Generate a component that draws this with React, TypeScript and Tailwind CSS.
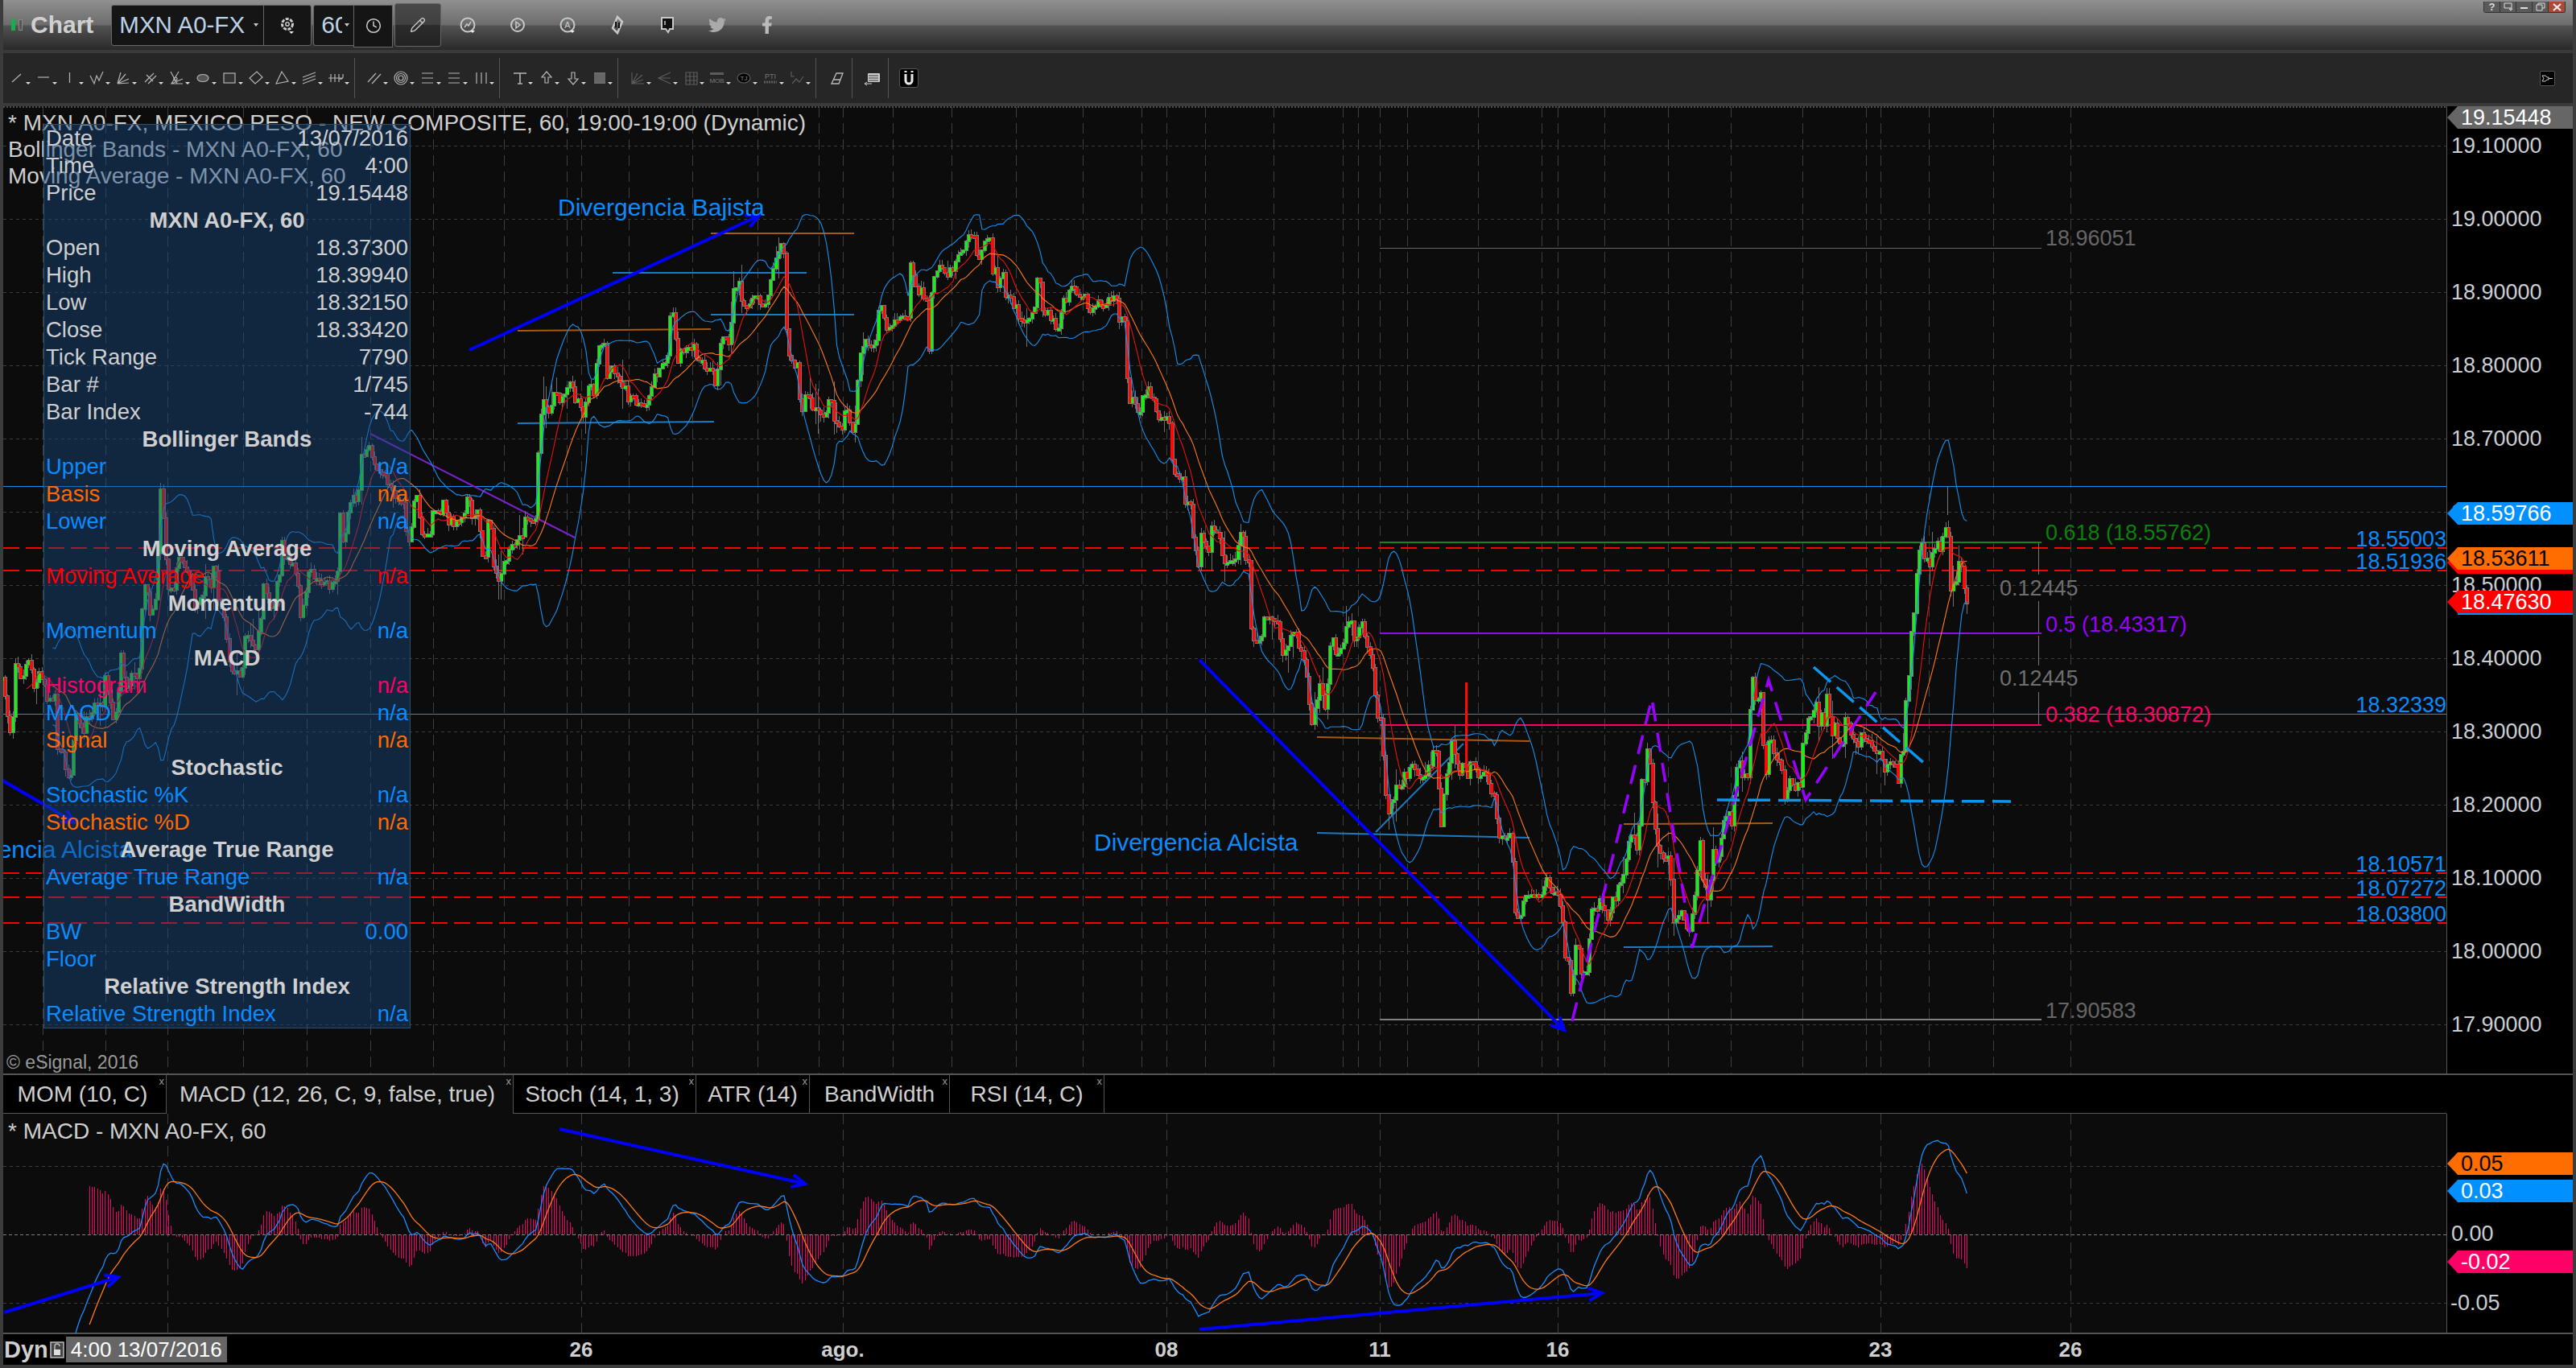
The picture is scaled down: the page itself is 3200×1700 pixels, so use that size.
import { Clock, Pencil } from 'lucide-react'
import { FaFacebookF, FaTwitter } from 'react-icons/fa'
import type { ReactNode } from 'react'

type Key = [number, number, number, 'g' | 'r']

// candles read off the chart: x, top of body, bottom of body, colour. All in page pixels.
const KEYS: Key[] = [
  [7, 845, 874, 'r'], [15, 898, 930, 'r'], [20, 816, 870, 'g'], [31, 825, 853, 'g'], [41, 822, 853, 'r'], [48, 835, 853, 'g'],
  [59, 853, 872, 'r'], [72, 865, 930, 'r'], [83, 939, 970, 'r'], [93, 886, 960, 'g'], [108, 890, 910, 'g'], [117, 870, 890, 'g'],
  [131, 841, 880, 'g'], [141, 878, 898, 'r'], [150, 808, 870, 'g'], [155, 821, 853, 'r'], [164, 835, 850, 'g'], [174, 832, 845, 'g'],
  [178, 720, 833, 'g'], [186, 730, 768, 'r'], [198, 650, 741, 'g'], [200, 605, 648, 'g'], [208, 660, 730, 'r'], [221, 690, 730, 'g'],
  [241, 714, 755, 'r'], [257, 710, 735, 'g'], [265, 702, 735, 'g'], [272, 710, 743, 'r'], [281, 760, 788, 'r'], [286, 796, 833, 'r'],
  [298, 833, 843, 'r'], [305, 792, 831, 'g'], [310, 790, 796, 'g'], [322, 782, 808, 'g'], [327, 723, 780, 'g'], [343, 723, 763, 'g'],
  [350, 690, 718, 'g'], [352, 644, 690, 'r'], [369, 702, 727, 'r'], [374, 731, 772, 'r'], [379, 739, 763, 'g'], [384, 704, 731, 'g'],
  [390, 706, 718, 'r'], [398, 714, 727, 'r'], [409, 718, 735, 'r'], [415, 712, 731, 'g'], [421, 690, 729, 'g'], [424, 623, 673, 'g'],
  [427, 623, 690, 'r'], [434, 630, 648, 'g'], [440, 615, 626, 'g'], [448, 565, 630, 'g'], [455, 562, 572, 'g'], [462, 557, 570, 'r'],
  [471, 577, 590, 'r'], [483, 590, 608, 'r'], [490, 600, 620, 'r'], [506, 623, 680, 'r'], [514, 640, 660, 'g'], [519, 597, 627, 'r'],
  [525, 647, 665, 'r'], [532, 664, 672, 'g'], [538, 630, 661, 'g'], [551, 618, 640, 'g'], [557, 637, 654, 'r'], [564, 642, 652, 'r'],
  [580, 620, 640, 'g'], [586, 613, 648, 'r'], [596, 630, 648, 'r'], [602, 682, 700, 'r'], [608, 620, 682, 'g'], [615, 694, 710, 'r'],
  [621, 713, 727, 'r'], [627, 692, 710, 'g'], [634, 672, 700, 'g'], [643, 672, 678, 'g'], [653, 637, 665, 'g'], [662, 648, 650, 'r'],
  [669, 558, 648, 'g'], [673, 496, 558, 'g'], [680, 495, 510, 'r'], [688, 484, 510, 'g'], [695, 490, 500, 'r'], [707, 472, 485, 'g'],
  [715, 480, 500, 'r'], [723, 492, 523, 'r'], [733, 470, 492, 'g'], [742, 432, 496, 'g'], [754, 423, 473, 'r'], [765, 454, 468, 'r'],
  [773, 470, 480, 'r'], [780, 478, 496, 'r'], [790, 492, 500, 'r'], [800, 500, 506, 'r'], [806, 490, 502, 'g'], [812, 468, 485, 'g'],
  [820, 455, 470, 'g'], [832, 396, 454, 'g'], [841, 385, 458, 'r'], [850, 428, 445, 'r'], [858, 423, 440, 'r'], [866, 430, 448, 'r'],
  [875, 445, 460, 'r'], [889, 461, 482, 'r'], [895, 430, 460, 'g'], [899, 415, 427, 'g'], [910, 363, 430, 'g'], [918, 347, 361, 'g'],
  [924, 368, 382, 'r'], [934, 372, 378, 'g'], [946, 370, 380, 'r'], [956, 351, 380, 'g'], [962, 323, 351, 'g'], [969, 302, 320, 'g'],
  [978, 315, 444, 'r'], [985, 444, 454, 'r'], [994, 454, 506, 'r'], [1000, 488, 508, 'g'], [1010, 495, 508, 'r'], [1020, 510, 518, 'r'],
  [1029, 494, 516, 'g'], [1036, 500, 523, 'r'], [1042, 523, 534, 'r'], [1050, 508, 530, 'g'], [1058, 516, 546, 'r'], [1062, 525, 540, 'g'],
  [1067, 437, 523, 'g'], [1074, 422, 436, 'g'], [1080, 420, 430, 'r'], [1087, 425, 430, 'g'], [1093, 372, 420, 'g'], [1102, 395, 412, 'r'],
  [1112, 396, 405, 'g'], [1120, 390, 398, 'g'], [1131, 325, 400, 'g'], [1140, 352, 365, 'r'], [1148, 360, 372, 'r'], [1154, 368, 444, 'r'],
  [1160, 347, 368, 'g'], [1166, 325, 347, 'g'], [1176, 335, 345, 'r'], [1182, 330, 340, 'g'], [1189, 315, 337, 'g'], [1201, 296, 313, 'g'],
  [1213, 287, 317, 'r'], [1222, 300, 320, 'g'], [1233, 299, 339, 'r'], [1240, 330, 363, 'r'], [1249, 335, 368, 'r'], [1259, 368, 380, 'r'],
  [1266, 380, 396, 'r'], [1272, 396, 403, 'r'], [1280, 392, 400, 'g'], [1288, 346, 392, 'g'], [1296, 350, 392, 'r'], [1306, 385, 400, 'r'],
  [1312, 395, 408, 'r'], [1320, 368, 406, 'g'], [1329, 354, 375, 'g'], [1339, 355, 368, 'r'], [1351, 368, 385, 'r'], [1362, 375, 385, 'g'],
  [1376, 370, 382, 'g'], [1385, 365, 378, 'g'], [1390, 365, 400, 'r'], [1399, 392, 416, 'r'], [1402, 447, 499, 'r'], [1412, 496, 516, 'r'],
  [1420, 495, 510, 'g'], [1431, 482, 496, 'r'], [1438, 496, 520, 'r'], [1453, 520, 527, 'r'], [1457, 527, 587, 'r'], [1465, 587, 595, 'r'],
  [1472, 589, 625, 'r'], [1482, 627, 667, 'r'], [1492, 665, 703, 'g'], [1505, 650, 690, 'g'], [1520, 670, 704, 'r'], [1540, 660, 694, 'g'],
  [1548, 668, 700, 'r'], [1555, 700, 796, 'r'], [1570, 765, 800, 'g'], [1592, 770, 815, 'r'], [1604, 785, 800, 'g'], [1614, 785, 810, 'r'],
  [1622, 810, 830, 'r'], [1634, 869, 911, 'g'], [1640, 850, 870, 'g'], [1650, 842, 882, 'g'], [1654, 785, 841, 'g'], [1660, 800, 815, 'r'],
  [1672, 780, 806, 'g'], [1683, 770, 800, 'r'], [1695, 768, 789, 'r'], [1706, 813, 834, 'r'], [1712, 862, 890, 'r'], [1718, 890, 925, 'r'],
  [1722, 943, 989, 'r'], [1729, 992, 1017, 'g'], [1735, 975, 996, 'g'], [1745, 960, 975, 'g'], [1752, 948, 967, 'g'], [1760, 950, 965, 'r'],
  [1766, 957, 972, 'r'], [1775, 945, 960, 'g'], [1781, 932, 955, 'g'], [1789, 932, 1027, 'r'], [1795, 968, 1027, 'g'], [1804, 922, 943, 'g'],
  [1813, 948, 965, 'r'], [1821, 945, 955, 'r'], [1827, 943, 970, 'g'], [1836, 950, 968, 'r'], [1842, 955, 972, 'g'], [1850, 965, 972, 'r'],
  [1858, 975, 996, 'g'], [1861, 996, 1038, 'r'], [1875, 1030, 1045, 'g'], [1881, 1045, 1111, 'r'], [1884, 1111, 1148, 'r'], [1893, 1115, 1136, 'g'],
  [1900, 1108, 1115, 'g'], [1910, 1112, 1118, 'r'], [1921, 1090, 1108, 'g'], [1928, 1102, 1112, 'r'], [1939, 1112, 1128, 'r'], [1944, 1129, 1189, 'r'],
  [1951, 1189, 1236, 'r'], [1957, 1178, 1224, 'g'], [1964, 1176, 1210, 'r'], [1976, 1132, 1204, 'g'], [1987, 1115, 1132, 'g'], [1996, 1128, 1145, 'r'],
  [2004, 1115, 1130, 'g'], [2010, 1097, 1118, 'g'], [2016, 1090, 1100, 'g'], [2022, 1045, 1090, 'g'], [2033, 1038, 1055, 'r'], [2039, 953, 1050, 'g'],
  [2045, 929, 1003, 'g'], [2051, 929, 960, 'r'], [2055, 960, 1052, 'r'], [2059, 1027, 1052, 'r'], [2068, 1060, 1070, 'r'], [2078, 1062, 1143, 'r'],
  [2088, 1132, 1146, 'g'], [2097, 1143, 1157, 'r'], [2104, 1115, 1150, 'g'], [2110, 1066, 1111, 'g'], [2115, 1041, 1096, 'r'], [2120, 1094, 1108, 'r'],
  [2123, 1108, 1127, 'r'], [2128, 1055, 1103, 'g'], [2137, 1043, 1080, 'g'], [2142, 1013, 1041, 'g'], [2151, 1010, 1027, 'r'], [2156, 971, 1010, 'g'],
  [2160, 934, 964, 'g'], [2168, 960, 968, 'g'], [2175, 860, 964, 'g'], [2180, 832, 873, 'r'], [2186, 864, 873, 'g'], [2191, 864, 934, 'r'],
  [2198, 913, 966, 'g'], [2206, 930, 948, 'r'], [2214, 941, 957, 'r'], [2217, 957, 994, 'r'], [2226, 968, 975, 'r'], [2234, 971, 982, 'g'],
  [2240, 922, 975, 'g'], [2246, 890, 918, 'g'], [2252, 883, 890, 'g'], [2260, 876, 905, 'r'], [2266, 887, 905, 'r'], [2274, 852, 918, 'r'],
  [2283, 900, 922, 'r'], [2292, 892, 925, 'g'], [2300, 897, 915, 'r'], [2312, 911, 932, 'g'], [2326, 922, 930, 'r'], [2340, 936, 957, 'r'],
  [2346, 950, 958, 'g'], [2358, 950, 978, 'r'], [2363, 931, 948, 'g'], [2369, 840, 930, 'g'], [2375, 772, 837, 'g'], [2379, 753, 772, 'g'],
  [2382, 697, 753, 'g'], [2386, 665, 697, 'g'], [2392, 683, 697, 'r'], [2396, 688, 703, 'r'], [2400, 682, 713, 'g'], [2406, 672, 692, 'g'],
  [2412, 680, 692, 'r'], [2415, 663, 680, 'g'], [2419, 640, 663, 'g'], [2423, 657, 727, 'r'], [2427, 727, 735, 'g'], [2432, 717, 727, 'g'],
  [2435, 690, 713, 'g'], [2439, 695, 732, 'r'], [2443, 733, 748, 'r'],
]

function rng(seed: number) {
  return () => {
    seed = (seed + 0x6d2b79f5) | 0
    let t = Math.imul(seed ^ (seed >>> 15), 1 | seed)
    t = (t + Math.imul(t ^ (t >>> 7), 61 | t)) ^ t
    return ((t ^ (t >>> 14)) >>> 0) / 4294967296
  }
}

const pts: [number, number][] = []
for (const [x, top, bot, c] of KEYS) {
  pts.push([x - 1.6, c === 'r' ? top : bot], [x + 1.6, c === 'r' ? bot : top])
}

function yAt(x: number) {
  if (x <= pts[0][0]) return pts[0][1]
  for (let i = 1; i < pts.length; i++) {
    if (x <= pts[i][0]) {
      const [x0, y0] = pts[i - 1]
      const [x1, y1] = pts[i]
      return y0 + ((x - x0) / Math.max(x1 - x0, 0.01)) * (y1 - y0)
    }
  }
  return pts[pts.length - 1][1]
}

const rand = rng(7)
const bars = Array.from({ length: 745 }, (_, i) => 3 + i * 3.28).map((x) => ({ x, c: yAt(x + 1.64) + (rand() - 0.5) * 7, o: 0, hi: 0, lo: 0 }))
bars.forEach((b, i) => {
  b.o = i ? bars[i - 1].c : b.c + 4
  const big = rand() < 0.12
  b.hi = Math.min(b.o, b.c) - rand() * (big ? 30 : 9)
  b.lo = Math.max(b.o, b.c) + rand() * (big ? 30 : 9)
})

const closes = bars.map((b) => b.c)
const sma = (n: number) => closes.map((_, i) => (i < n - 1 ? null : closes.slice(i - n + 1, i + 1).reduce((a, v) => a + v, 0) / n))
const basis = sma(20)
const fast = sma(10)
const dev = closes.map((_, i) => {
  const m = basis[i]
  if (m === null) return 0
  const w = closes.slice(i - 19, i + 1)
  return Math.sqrt(w.reduce((a, v) => a + (v - m) ** 2, 0) / 20)
})
const line = (vals: (number | null)[]) =>
  vals.map((v, i) => (v === null ? '' : `${bars[i].x.toFixed(1)},${v.toFixed(1)}`)).filter(Boolean).join(' ')

// MACD is worked out from the pixel series; 910px is one price unit on the main pane
function ema(src: (number | null)[], n: number) {
  const k = 2 / (n + 1)
  const out: (number | null)[] = src.map(() => null)
  let prev: number | null = null
  let seen = 0
  let sum = 0
  src.forEach((v, i) => {
    if (v === null) return
    if (prev === null) {
      sum += v
      seen++
      if (seen === n) {
        prev = sum / n
        out[i] = prev
      }
    } else {
      prev = v * k + prev * (1 - k)
      out[i] = prev
    }
  })
  return out
}
const prices = closes.map((y) => 19 - (y - 272) / 910)
const e12 = ema(prices, 12)
const e26 = ema(prices, 26)
const macd = prices.map((_, i) => (e26[i] === null ? null : (e12[i] as number) - (e26[i] as number) - 0.05 * Math.exp(-(i - 25) / 14)))
const signal = ema(macd, 9)
const macdY = (v: number) => 1535 - v * 1600

const GRID_X = [53, 131, 208, 302, 381, 460, 538, 626, 704, 722, 781, 860, 941, 1017, 1047, 1109, 1182, 1262, 1345, 1418, 1449, 1497, 1582, 1668, 1687, 1714, 1748, 1836, 1915, 1935, 1993, 2072, 2150, 2239, 2318, 2336, 2396, 2476, 2572]
const PRICES = ['19.10000', '19.00000', '18.90000', '18.80000', '18.70000', '18.60000', '18.50000', '18.40000', '18.30000', '18.20000', '18.10000', '18.00000', '17.90000']
const priceY = (p: string) => 272 + (19 - Number(p)) * 910

const RED_LINES = [
  ['18.55003', 681],
  ['18.51936', 709],
  ['18.10571', 1085],
  ['18.07272', 1115],
  ['18.03800', 1147],
] as const

function Arrow({ x1, y1, x2, y2, w = 4 }: { x1: number; y1: number; x2: number; y2: number; w?: number }) {
  const a = Math.atan2(y2 - y1, x2 - x1)
  const p = (d: number) => `${x2 - 18 * Math.cos(a + d)},${y2 - 18 * Math.sin(a + d)}`
  return (
    <g stroke="#0000ff" strokeWidth={w} fill="none">
      <line x1={x1} y1={y1} x2={x2} y2={y2} />
      <polyline points={`${p(0.45)} ${x2},${y2} ${p(-0.45)}`} />
    </g>
  )
}

function MainChart() {
  return (
    <svg className="absolute inset-0" width={3035} height={1202} viewBox="4 132 3035 1202" fontSize={27}>
      <line x1={4} x2={3039} y1={133} y2={133} stroke="#8a8a8a" strokeDasharray="2 2" />
      <g shapeRendering="crispEdges">
        {PRICES.map((p) => (
          <line key={p} x1={4} x2={3039} y1={priceY(p)} y2={priceY(p)} stroke="#3a3a3a" strokeDasharray="4 4" />
        ))}
        {GRID_X.map((x) => (
          <line key={x} x1={x} x2={x} y1={133} y2={1334} stroke="#3e3e3e" strokeDasharray="13 7" />
        ))}
        <line x1={4} x2={3039} y1={604} y2={604} stroke="#1a90e8" />
        <line x1={4} x2={3039} y1={887} y2={887} stroke="#1a90e8" />
        {RED_LINES.map(([, y]) => (
          <line key={y} x1={4} x2={3039} y1={y} y2={y} stroke="#ff0000" strokeWidth={2} strokeDasharray="20 8" />
        ))}
        <line x1={1714} x2={2536} y1={308} y2={308} stroke="#666" />
        <line x1={1714} x2={2536} y1={674} y2={674} stroke="#0f8a0f" strokeWidth={2} />
        <line x1={1714} x2={2536} y1={787} y2={787} stroke="#8a10e0" strokeWidth={2} />
        <line x1={1714} x2={2536} y1={901} y2={901} stroke="#ff0066" strokeWidth={2} />
        <line x1={1714} x2={2536} y1={1267} y2={1267} stroke="#808080" strokeWidth={2} />
        <g stroke="#777">
          <line x1={2532} x2={2532} y1={675} y2={714} />
          <line x1={2532} x2={2532} y1={747} y2={786} />
          <line x1={2532} x2={2532} y1={790} y2={827} />
          <line x1={2532} x2={2532} y1={860} y2={900} />
        </g>
      </g>

      <g>
        <line x1={460} y1={539} x2={714} y2={668} stroke="#7a22cc" strokeWidth={2} />
        <g strokeWidth={2} fill="none">
          <line x1={643} y1={411} x2={883} y2={409} stroke="#a85a10" />
          <line x1={883} y1={290} x2={1061} y2={290} stroke="#a85a10" />
          <line x1={643} y1={526} x2={887} y2={524} stroke="#1b7bc0" />
          <line x1={761} y1={339} x2={1002} y2={339} stroke="#1b7bc0" />
          <line x1={883} y1={391} x2={1061} y2={391} stroke="#1b7bc0" />
          <line x1={1636} y1={916} x2={1900} y2={921} stroke="#a85a10" />
          <line x1={1636} y1={1035} x2={1900} y2={1041} stroke="#1b7bc0" />
          <line x1={1709} y1={1034} x2={1818} y2={924} stroke="#1b7bc0" />
          <line x1={2017} y1={1024} x2={2202} y2={1023} stroke="#a85a10" />
          <line x1={2017} y1={1177} x2={2202} y2={1176} stroke="#1b7bc0" />
        </g>
      </g>

      {/* candles: gray outline pass first, colour on top so the bodies stay bright where they overlap */}
      <g shapeRendering="crispEdges">
        {bars.map((b, i) => (
          <g key={i} fill="#787878">
            <line x1={b.x} x2={b.x} y1={b.hi} y2={b.lo} stroke="#6f6f6f" />
            <rect x={b.x - 2.5} y={Math.min(b.o, b.c) - 1} width={5} height={Math.max(Math.abs(b.o - b.c), 3) + 2} />
          </g>
        ))}
        {bars.map((b, i) => (
          <rect
            key={i}
            x={b.x - 1.6}
            y={Math.min(b.o, b.c)}
            width={3.2}
            height={Math.max(Math.abs(b.o - b.c), 3)}
            fill={b.c < b.o ? '#14f014' : '#ff0808'}
          />
        ))}
        <line x1={1821} x2={1821} y1={848} y2={957} stroke="#ff0808" strokeWidth={3} />
        <line x1={2419} x2={2419} y1={604} y2={640} stroke="#777" />
        <line x1={2443} x2={2443} y1={748} y2={763} stroke="#777" />
      </g>

      <g fill="none" strokeWidth={1.1}>
        <polyline points={line(basis.map((m, i) => (m === null ? null : m - 2 * dev[i])))} stroke="#1690f0" />
        <polyline points={line(basis.map((m, i) => (m === null ? null : m + 2 * dev[i])))} stroke="#1690f0" />
        <polyline points={line(basis)} stroke="#ff7a1a" />
        <polyline points={line(fast)} stroke="#e8120c" />
      </g>

      <Arrow x1={583} y1={435} x2={943} y2={268} />
      <Arrow x1={0} y1={968} x2={93} y2={1022} />
      <Arrow x1={1490} y1={820} x2={1943} y2={1280} />
      <g fill="none">
        <path d="M1953 1269 L2052 868 L2102 1178 L2197 845 L2243 994 L2330 860" stroke="#9900ff" strokeWidth={3.5} strokeDasharray="24 14" />
        <line x1={2253} y1={829} x2={2392} y2={950} stroke="#0a96ee" strokeWidth={3.5} strokeDasharray="28 10" />
        <line x1={2133} y1={994} x2={2498} y2={996} stroke="#0a96ee" strokeWidth={3.5} strokeDasharray="28 10" />
      </g>

      <g fontSize={28} fill="#cfcfcf">
        <text x={10} y={162}>* MXN A0-FX, MEXICO PESO - NEW COMPOSITE, 60, 19:00-19:00 (Dynamic)</text>
        <text x={10} y={195}>Bollinger Bands - MXN A0-FX, 60</text>
        <text x={10} y={228}>Moving Average - MXN A0-FX, 60</text>
      </g>
      <text x={8} y={1328} fill="#9a9a9a" fontSize={23}>© eSignal, 2016</text>

      <g fontSize={30} fill="#0a8cff">
        <text x={693} y={268}>Divergencia Bajista</text>
        <text x={1359} y={1057}>Divergencia Alcista</text>
        <text x={-89} y={1066}>Divergencia Alcista</text>
      </g>
      <g>
        <text x={2541} y={305} fill="#666">18.96051</text>
        <text x={2541} y={671} fill="#0c7f0c">0.618 (18.55762)</text>
        <text x={2541} y={785} fill="#9900ff">0.5 (18.43317)</text>
        <text x={2541} y={897} fill="#ff0066">0.382 (18.30872)</text>
        <text x={2541} y={1265} fill="#666">17.90583</text>
        <text x={2484} y={740} fill="#6f6f6f">0.12445</text>
        <text x={2484} y={852} fill="#6f6f6f">0.12445</text>
      </g>
      <g textAnchor="end" fill="#0a8cff">
        {RED_LINES.map(([label, y]) => (
          <text key={label} x={3039} y={y - 2}>{label}</text>
        ))}
        <text x={3039} y={885}>18.32339</text>
      </g>
    </svg>
  )
}

type Row = { l?: string; v?: string; h?: string; c?: string }
const BLUE = 'text-[#0a8cff]'
const ORANGE = 'text-[#ff6a00]'
const PINK = 'text-[#ff0066]'
const RED = 'text-[#ff0000]'

const ROWS: Row[] = [
  { l: 'Date', v: '13/07/2016' },
  { l: 'Time', v: '4:00' },
  { l: 'Price', v: '19.15448' },
  { h: 'MXN A0-FX, 60' },
  { l: 'Open', v: '18.37300' },
  { l: 'High', v: '18.39940' },
  { l: 'Low', v: '18.32150' },
  { l: 'Close', v: '18.33420' },
  { l: 'Tick Range', v: '7790' },
  { l: 'Bar #', v: '1/745' },
  { l: 'Bar Index', v: '-744' },
  { h: 'Bollinger Bands' },
  { l: 'Upper', v: 'n/a', c: BLUE },
  { l: 'Basis', v: 'n/a', c: ORANGE },
  { l: 'Lower', v: 'n/a', c: BLUE },
  { h: 'Moving Average' },
  { l: 'Moving Average', v: 'n/a', c: RED },
  { h: 'Momentum' },
  { l: 'Momentum', v: 'n/a', c: BLUE },
  { h: 'MACD' },
  { l: 'Histogram', v: 'n/a', c: PINK },
  { l: 'MACD', v: 'n/a', c: BLUE },
  { l: 'Signal', v: 'n/a', c: ORANGE },
  { h: 'Stochastic' },
  { l: 'Stochastic %K', v: 'n/a', c: BLUE },
  { l: 'Stochastic %D', v: 'n/a', c: ORANGE },
  { h: 'Average True Range' },
  { l: 'Average True Range', v: 'n/a', c: BLUE },
  { h: 'BandWidth' },
  { l: 'BW', v: '0.00', c: BLUE },
  { l: 'Floor', c: BLUE },
  { h: 'Relative Strength Index' },
  { l: 'Relative Strength Index', v: 'n/a', c: BLUE },
]

function DataPanel() {
  return (
    <div className="absolute left-[50px] top-[22px] w-[456px] bg-[#19487f]/45 border border-[#2c5068] text-[27.5px] leading-none text-[#cfcfcf]">
      {ROWS.map((r, i) =>
        r.h ? (
          <div key={i} className="h-[34px] flex items-center justify-center font-bold">{r.h}</div>
        ) : (
          <div key={i} className={`h-[34px] flex items-center justify-between pl-[2px] pr-[2px] ${r.c ?? ''}`}>
            <span>{r.l}</span>
            <span>{r.v}</span>
          </div>
        ),
      )}
    </div>
  )
}

function Tag({ top, text, bg, dark }: { top: number; text: string; bg: string; dark?: boolean }) {
  return (
    <div
      className={`absolute left-0 w-full h-[28px] flex items-center pl-[17px] text-[27px] leading-none [clip-path:polygon(0_50%,13px_0,100%_0,100%_100%,13px_100%)] ${bg} ${dark ? 'text-black' : 'text-white'}`}
      style={{ top }}
    >
      {text}
    </div>
  )
}

function PriceAxis() {
  return (
    <div className="relative w-[157px] bg-black border-l border-[#555] overflow-hidden">
      {PRICES.map((p) => (
        <div key={p} className="absolute left-[5px] text-[27px] leading-none text-[#c8ced4] -translate-y-1/2" style={{ top: priceY(p) - 132 }}>
          {p}
        </div>
      ))}
      <Tag top={0} text="19.15448" bg="bg-[#666666]" />
      <Tag top={492} text="18.59766" bg="bg-[#0090ff]" />
      <Tag top={553} text="18.52044" bg="bg-[#ff0000]" />
      <Tag top={548} text="18.53611" bg="bg-[#ff6c00]" dark />
      <div className="absolute left-[13px] right-0 top-[630px] h-[2px] bg-[#0090ff]" />
      <Tag top={602} text="18.47630" bg="bg-[#ff0000]" />
    </div>
  )
}

const TABS = [
  ['MOM (10, C)', 'w-[203px] pr-[5px]', true],
  ['MACD (12, 26, C, 9, false, true)', 'w-[431px] pr-[6px]', false],
  ['Stoch (14, 1, 3)', 'w-[227px] pr-[6px]', true],
  ['ATR (14)', 'w-[141px]', true],
  ['BandWidth', 'w-[174px]', true],
  ['RSI (14, C)', 'w-[192px]', true],
] as const

function TabStrip() {
  return (
    <div className="flex h-[50px] border-t-2 border-[#555] shrink-0">
      <div className="flex flex-1 bg-black">
        {TABS.map(([label, w, inactive]) => (
          <div
            key={label}
            className={`relative ${w} flex items-center justify-center text-[28px] leading-none text-[#cfcfcf] border-r border-[#555] ${inactive ? 'border-b' : 'bg-[#0c0c0c]'}`}
          >
            {label}
            <span className="absolute right-[2px] top-[1px] text-[13px] leading-none text-[#999]">x</span>
          </div>
        ))}
        <div className="flex-1 border-b border-[#555]" />
      </div>
      <div className="w-[157px] bg-black" />
    </div>
  )
}

function MacdChart() {
  return (
    <svg className="absolute inset-0" width={3035} height={273} viewBox="4 1385 3035 273" fontSize={28}>
      <g shapeRendering="crispEdges">
        <line x1={4} x2={3039} y1={1450} y2={1450} stroke="#3a3a3a" strokeDasharray="4 4" />
        <line x1={4} x2={3039} y1={1620} y2={1620} stroke="#3a3a3a" strokeDasharray="4 4" />
        {[208, 722, 1047, 1449, 1714, 1935, 2336, 2572].map((x) => (
          <line key={x} x1={x} x2={x} y1={1385} y2={1658} stroke="#3e3e3e" strokeDasharray="13 7" />
        ))}
        {macd.map((m, i) => {
          const s = signal[i]
          if (m === null || s === null) return null
          const d = (m - s) * 1.7
          return <line key={i} x1={bars[i].x} x2={bars[i].x} y1={1535} y2={macdY(d)} stroke="#f0006a" />
        })}
        <line x1={4} x2={3039} y1={1535} y2={1535} stroke="#808080" strokeDasharray="4 3" />
      </g>
      <g fill="none" strokeWidth={1.3}>
        <polyline points={line(macd.map((v) => (v === null ? null : macdY(v))))} stroke="#1a8cff" />
        <polyline points={line(signal.map((v) => (v === null ? null : macdY(v))))} stroke="#ff7a1a" />
      </g>
      <Arrow x1={5} y1={1632} x2={147} y2={1588} />
      <Arrow x1={695} y1={1404} x2={1000} y2={1472} />
      <Arrow x1={1490} y1={1653} x2={1990} y2={1608} />
      <text x={10} y={1416} fill="#cfcfcf">* MACD - MXN A0-FX, 60</text>
    </svg>
  )
}

function MacdPane() {
  return (
    <div className="flex h-[274px] shrink-0 border-b-2 border-[#555]">
      <div className="relative flex-1 bg-[#0c0c0c]">
        <MacdChart />
      </div>
      <div className="relative w-[157px] bg-black border-l border-[#555] overflow-hidden">
        <Tag top={48} text="0.05" bg="bg-[#ff6c00]" dark />
        <Tag top={82} text="0.03" bg="bg-[#0090ff]" />
        <div className="absolute left-[5px] top-[136px] text-[27px] leading-none text-[#c8ced4]">0.00</div>
        <Tag top={170} text="-0.02" bg="bg-[#ff0066]" />
        <div className="absolute left-[4px] top-[222px] text-[27px] leading-none text-[#c8ced4]">-0.05</div>
      </div>
    </div>
  )
}

const DATES = [
  ['26', 722],
  ['ago.', 1047],
  ['08', 1449],
  ['11', 1714],
  ['16', 1935],
  ['23', 2336],
  ['26', 2572],
] as const

function TimeAxis() {
  return (
    <div className="relative flex items-center h-[38px] shrink-0 bg-black">
      <span className="ml-[1px] text-[29px] leading-none font-bold text-[#cfcfcf]">Dyn</span>
      <svg className="ml-[2px] w-[18px] h-[24px]" viewBox="0 0 18 24" fill="none" stroke="#bbb" strokeWidth={1.5}>
        <rect x={1} y={3} width={16} height={19} fill="#444" />
        <rect x={5} y={12} width={8} height={7} fill="#ddd" stroke="none" />
        <path d="M6 12V8a3 3 0 0 1 6 0" />
      </svg>
      <div className="ml-[2px] w-[200px] h-[32px] bg-[#666] text-white text-[26px] leading-none flex items-center justify-center">4:00 13/07/2016</div>
      {DATES.map(([d, x]) => (
        <span key={x} className="absolute top-[6px] -translate-x-1/2 text-[26px] leading-none font-bold text-[#cfcfcf]" style={{ left: x - 4 }}>
          {d}
        </span>
      ))}
    </div>
  )
}

const Caret = () => <path d="M25 22h6l-3 3z" fill="#ddd" stroke="none" />

function Tool({ children, dim }: { children: ReactNode; dim?: boolean }) {
  return (
    <svg className="w-[33px] h-[34px] shrink-0" viewBox="0 0 33 34" fill="none" stroke={dim ? '#5c5c5c' : '#b4b4b4'} strokeWidth={1.2}>
      {children}
      <Caret />
    </svg>
  )
}

const Sep = () => <div className="ml-[4px] mr-[10px] w-px h-[50px] bg-[#555] shrink-0" />

function DrawBar() {
  return (
    <div className="flex items-center h-[68px] shrink-0 pl-[3px] bg-[#262626] border-t-2 border-b-4 border-[#3a3a3a]">
      <Tool><path d="M8 22 19 12" /></Tool>
      <Tool><path d="M7 16h14" /></Tool>
      <Tool><path d="M13.5 10v13" /></Tool>
      <Tool><path d="m6 14 5 10 3-10 3 6 5-11" /></Tool>
      <Tool><path d="M7 24 11 10M7 24l10-12M7 24l14-6M7 24l14-1" /></Tool>
      <Tool><path d="m8 22 11-11M12 24l10-10M10 13l8 8" /></Tool>
      <Tool><path d="m7 9 8 15M8 24 17 9M8 24l14-6M7 24h15" /><circle cx="13" cy="18" r="2" /></Tool>
      <Tool><ellipse cx="14" cy="17" rx="7" ry="4.5" fill="#555" /></Tool>
      <Tool><rect x="7" y="11" width="14" height="12" fill="#333" /></Tool>
      <Tool><path d="m13 24-7-7 9-8 7 7z" /></Tool>
      <Tool><path d="m13 9 8 12-15 3z" /></Tool>
      <Tool><path d="m6 16 16-6M6 20l16-6M6 24l16-6" /></Tool>
      <Tool><path d="M5 17h18M8 12v10M13 12v10M18 12v10M23 12v4a3 3 0 0 1-4 2" /></Tool>
      <Sep />
      <Tool><path d="m6 22 10-11M11 24l11-12" /></Tool>
      <Tool><circle cx="14" cy="17" r="8" /><circle cx="14" cy="17" r="5.5" /><circle cx="14" cy="17" r="3" /></Tool>
      <Tool><path d="M7 11h14M7 17h14M7 23h14" /></Tool>
      <Tool><path d="M7 11h14M7 17h14M7 23h14" /></Tool>
      <Tool><path d="M9 10v14M15 10v14M21 10v14" /></Tool>
      <Sep />
      <Tool><path d="M8 12v-1h14v1M15 11v13M12 24h6" strokeWidth={1.6} /></Tool>
      <Tool><path d="M15 9l-6 7h4v7h4v-7h4z" /></Tool>
      <Tool><path d="M15 25l-6-7h4v-8h4v8h4z" /></Tool>
      <Tool><path d="M8 11h14M8 23h14" /><rect x="8" y="12" width="14" height="10" fill="#666" stroke="none" /></Tool>
      <Sep />
      <Tool dim><path d="M7 10v14h15M7 24 20 13M7 24l14-5M7 24l7-13" /></Tool>
      <Tool dim><path d="M22 10 7 17l15 7M7 17h15" /></Tool>
      <Tool dim><path d="M8 10h14v15H8zM8 15h14M8 20h14M13 10v15M18 10v15" /></Tool>
      <Tool dim>
        <rect x="5" y="10" width="17" height="3" fill="#5c5c5c" stroke="none" />
        <text x="13.5" y="23" fontSize="8" textAnchor="middle" fill="#777" stroke="none">MOB</text>
      </Tool>
      <Tool dim>
        <ellipse cx="14" cy="17" rx="8" ry="6" fill="#000" />
        <text x="14" y="20" fontSize="8" textAnchor="middle" fill="#888" stroke="none">TJ</text>
      </Tool>
      <Tool dim>
        <text x="14" y="18" fontSize="9" textAnchor="middle" fill="#777" stroke="none">PTI</text>
        <path d="M6 22h16" strokeDasharray="2 1" strokeWidth={3} />
      </Tool>
      <Tool dim><path d="M7 9v6h4M8 24l5-6 4 4 5-7" /></Tool>
      <Sep />
      <svg className="w-[30px] h-[34px] shrink-0" viewBox="0 0 30 34" fill="none" stroke="#bbb" strokeWidth={1.3}>
        <path d="M9 24 15 11h8l-5 13zM11 19h9" />
      </svg>
      <Sep />
      <svg className="w-[30px] h-[34px] shrink-0" viewBox="0 0 30 34" fill="#ccc" stroke="#ccc">
        <rect x="9" y="11" width="15" height="11" rx="1" stroke="none" />
        <path d="M10 14h12M10 17h12M10 20h12" stroke="#333" />
        <path d="M5 24h9M5 24l3-2M5 24l3 2" fill="none" />
      </svg>
      <Sep />
      <div className="ml-[3px] w-[24px] h-[24px] rounded-[3px] bg-black border border-[#555] flex items-center justify-center">
        <svg className="w-[16px] h-[19px]" viewBox="0 0 16 19" fill="none" stroke="#e8e8e8">
          <path d="M4 4v8a4 4 0 0 0 8 0V4" strokeWidth={3} />
          <path d="M2.5 1h3M10.5 1h3" strokeWidth={2} />
        </svg>
      </div>
      <div className="ml-auto mr-[22px] w-[19px] h-[19px] rounded-[2px] bg-black border border-[#555] flex items-center justify-center">
        <svg className="w-[15px] h-[11px]" viewBox="0 0 15 11" fill="none" stroke="#ccc">
          <path d="M1 2h4l2 2h2v3H7L5 9H1l2-3.5zM9 5.5h5" />
        </svg>
      </div>
    </div>
  )
}

function CircleIcon({ children }: { children?: ReactNode }) {
  return (
    <svg className="w-[62px] h-[26px] shrink-0" viewBox="0 0 62 26" fill="none" stroke="#c8c8c8" strokeWidth={2}>
      {children}
    </svg>
  )
}

function WindowButtons() {
  const cell = 'w-[20px] h-[13px] flex items-center justify-center border-r border-[#333] text-[13px] leading-none font-bold text-[#ddd]'
  return (
    <div className="ml-auto mr-[9px] self-start mt-[2px] flex rounded-b-[3px] border border-t-0 border-[#333] overflow-hidden">
      <div className={`${cell} bg-[#5a5a5a]`}>?</div>
      <div className={`${cell} bg-[#5a5a5a]`}>
        <svg width="12" height="11" viewBox="0 0 12 11" fill="none" stroke="#ddd"><path d="M1 1h9v6H1zM7 8h4l-2 2z" /></svg>
      </div>
      <div className={`${cell} bg-[#5a5a5a]`}>
        <svg width="10" height="6" viewBox="0 0 10 6"><rect y="3" width="9" height="2" fill="#ddd" /></svg>
      </div>
      <div className={`${cell} bg-[#5a5a5a]`}>
        <svg width="12" height="11" viewBox="0 0 12 11" fill="none" stroke="#ddd"><path d="M3 3V1h8v6H8M1 3h7v7H1z" /></svg>
      </div>
      <div className="w-[20px] h-[13px] flex items-center justify-center bg-[#a84a36]">
        <svg width="11" height="10" viewBox="0 0 11 10" stroke="#eee" strokeWidth={2.2}><path d="m1 1 9 8M10 1 1 9" /></svg>
      </div>
    </div>
  )
}

function TitleBar() {
  return (
    <div className="flex items-center h-[64px] shrink-0 border-b-2 border-[#3a3a3a] bg-[linear-gradient(to_bottom,#909090_0,#6c6c6c_31px,#525252_32px,#292929_62px)]">
      <div className="ml-[10px] w-[5px] h-[14px] bg-[#12b04a]" />
      <div className="ml-[4px] w-[5px] h-[14px] bg-[#555] border border-[#888]" />
      <span className="ml-[10px] text-[30px] leading-none font-bold text-[#d0d0d0]">Chart</span>
      <div className="ml-[22px] w-[249px] h-[51px] flex items-center bg-[#151515] border border-[#666] rounded-[3px]">
        <span className="ml-[9px] w-[164px] text-[29.5px] leading-none whitespace-nowrap text-[#bcd2e6]">MXN A0-FX</span>
        <svg className="w-[9px] h-[6px] ml-[2px]" viewBox="0 0 9 6"><path d="M1 1h6L4 5z" fill="#ccc" /></svg>
        <div className="ml-[4px] w-px self-stretch bg-[#666]" />
        <div className="flex-1 flex justify-center">
          <svg className="w-[20px] h-[24px]" viewBox="0 0 20 24" fill="none" stroke="#ccc">
            <circle cx="10" cy="11" r="6.5" strokeWidth={3} strokeDasharray="4 1.5" />
            <circle cx="10" cy="11" r="2.2" strokeWidth={1.5} />
            <path d="M12 20h6l-3 3z" fill="#eee" stroke="none" />
          </svg>
        </div>
      </div>
      <div className="ml-[2px] w-[50px] h-[51px] flex items-center bg-[#151515] border border-r-0 border-[#666] rounded-l-[3px]">
        <span className="ml-[9px] w-[26px] overflow-hidden text-[30px] leading-none text-[#bcd2e6]">60</span>
        <svg className="w-[9px] h-[6px] ml-[2px]" viewBox="0 0 9 6"><path d="M1 1h6L4 5z" fill="#ccc" /></svg>
      </div>
      <div className="w-[49px] h-[53px] mt-[2px] flex items-center justify-center bg-[#151515] border border-[#666]">
        <Clock className="w-[20px] h-[20px] text-[#ccc]" strokeWidth={1.8} />
      </div>
      <div className="ml-[2px] w-[58px] h-[54px] flex items-center justify-center rounded-[3px] border border-[#666] bg-[linear-gradient(to_bottom,#484848_0,#404040_50%,#2c2c2c_50%,#222_100%)]">
        <Pencil className="w-[20px] h-[20px] text-[#ccc]" strokeWidth={1.6} />
      </div>
      <div className="ml-[2px] flex items-center">
        <CircleIcon><circle cx="31" cy="13" r="8.5" /><path d="m27 16 3-4 2 2 3-5" strokeWidth={1.5} /><path d="M34 20h6l-3 3z" fill="#eee" stroke="none" /></CircleIcon>
        <CircleIcon><circle cx="31" cy="13" r="8" /><path d="M29 9v8l5-4z" strokeWidth={1.5} /></CircleIcon>
        <CircleIcon><circle cx="31" cy="13" r="8.5" /><text x="31" y="17" fontSize="11" textAnchor="middle" fill="#ccc" stroke="none">A</text><path d="M34 20h6l-3 3z" fill="#eee" stroke="none" /></CircleIcon>
        <CircleIcon><path d="m31 3 6 6-6 14-6-6z" strokeWidth={2.5} /><path d="M29 16V9M33 17V10" stroke="#111" strokeWidth={2} /></CircleIcon>
        <CircleIcon><path d="M24 4h14v14h-4l-2 4-3-4h-5z" fill="#111" /><path d="M28 8v5" strokeWidth={1.5} /></CircleIcon>
        <div className="w-[62px] flex justify-center"><FaTwitter className="w-[22px] h-[22px] text-[#aaa]" /></div>
        <div className="w-[62px] flex justify-center"><FaFacebookF className="w-[18px] h-[22px] text-[#bbb]" /></div>
      </div>
      <WindowButtons />
    </div>
  )
}

export default function App() {
  return (
    <div className="flex flex-col w-[3200px] h-[1700px] overflow-hidden bg-black border-x-4 border-b-4 border-[#3c3c3c] [font-family:'Liberation_Sans',Arial,sans-serif]">
      <TitleBar />
      <DrawBar />
      <div className="flex h-[1202px] shrink-0">
        <div className="relative flex-1 overflow-hidden bg-[#0c0c0c]">
          <MainChart />
          <DataPanel />
        </div>
        <PriceAxis />
      </div>
      <TabStrip />
      <MacdPane />
      <TimeAxis />
    </div>
  )
}
